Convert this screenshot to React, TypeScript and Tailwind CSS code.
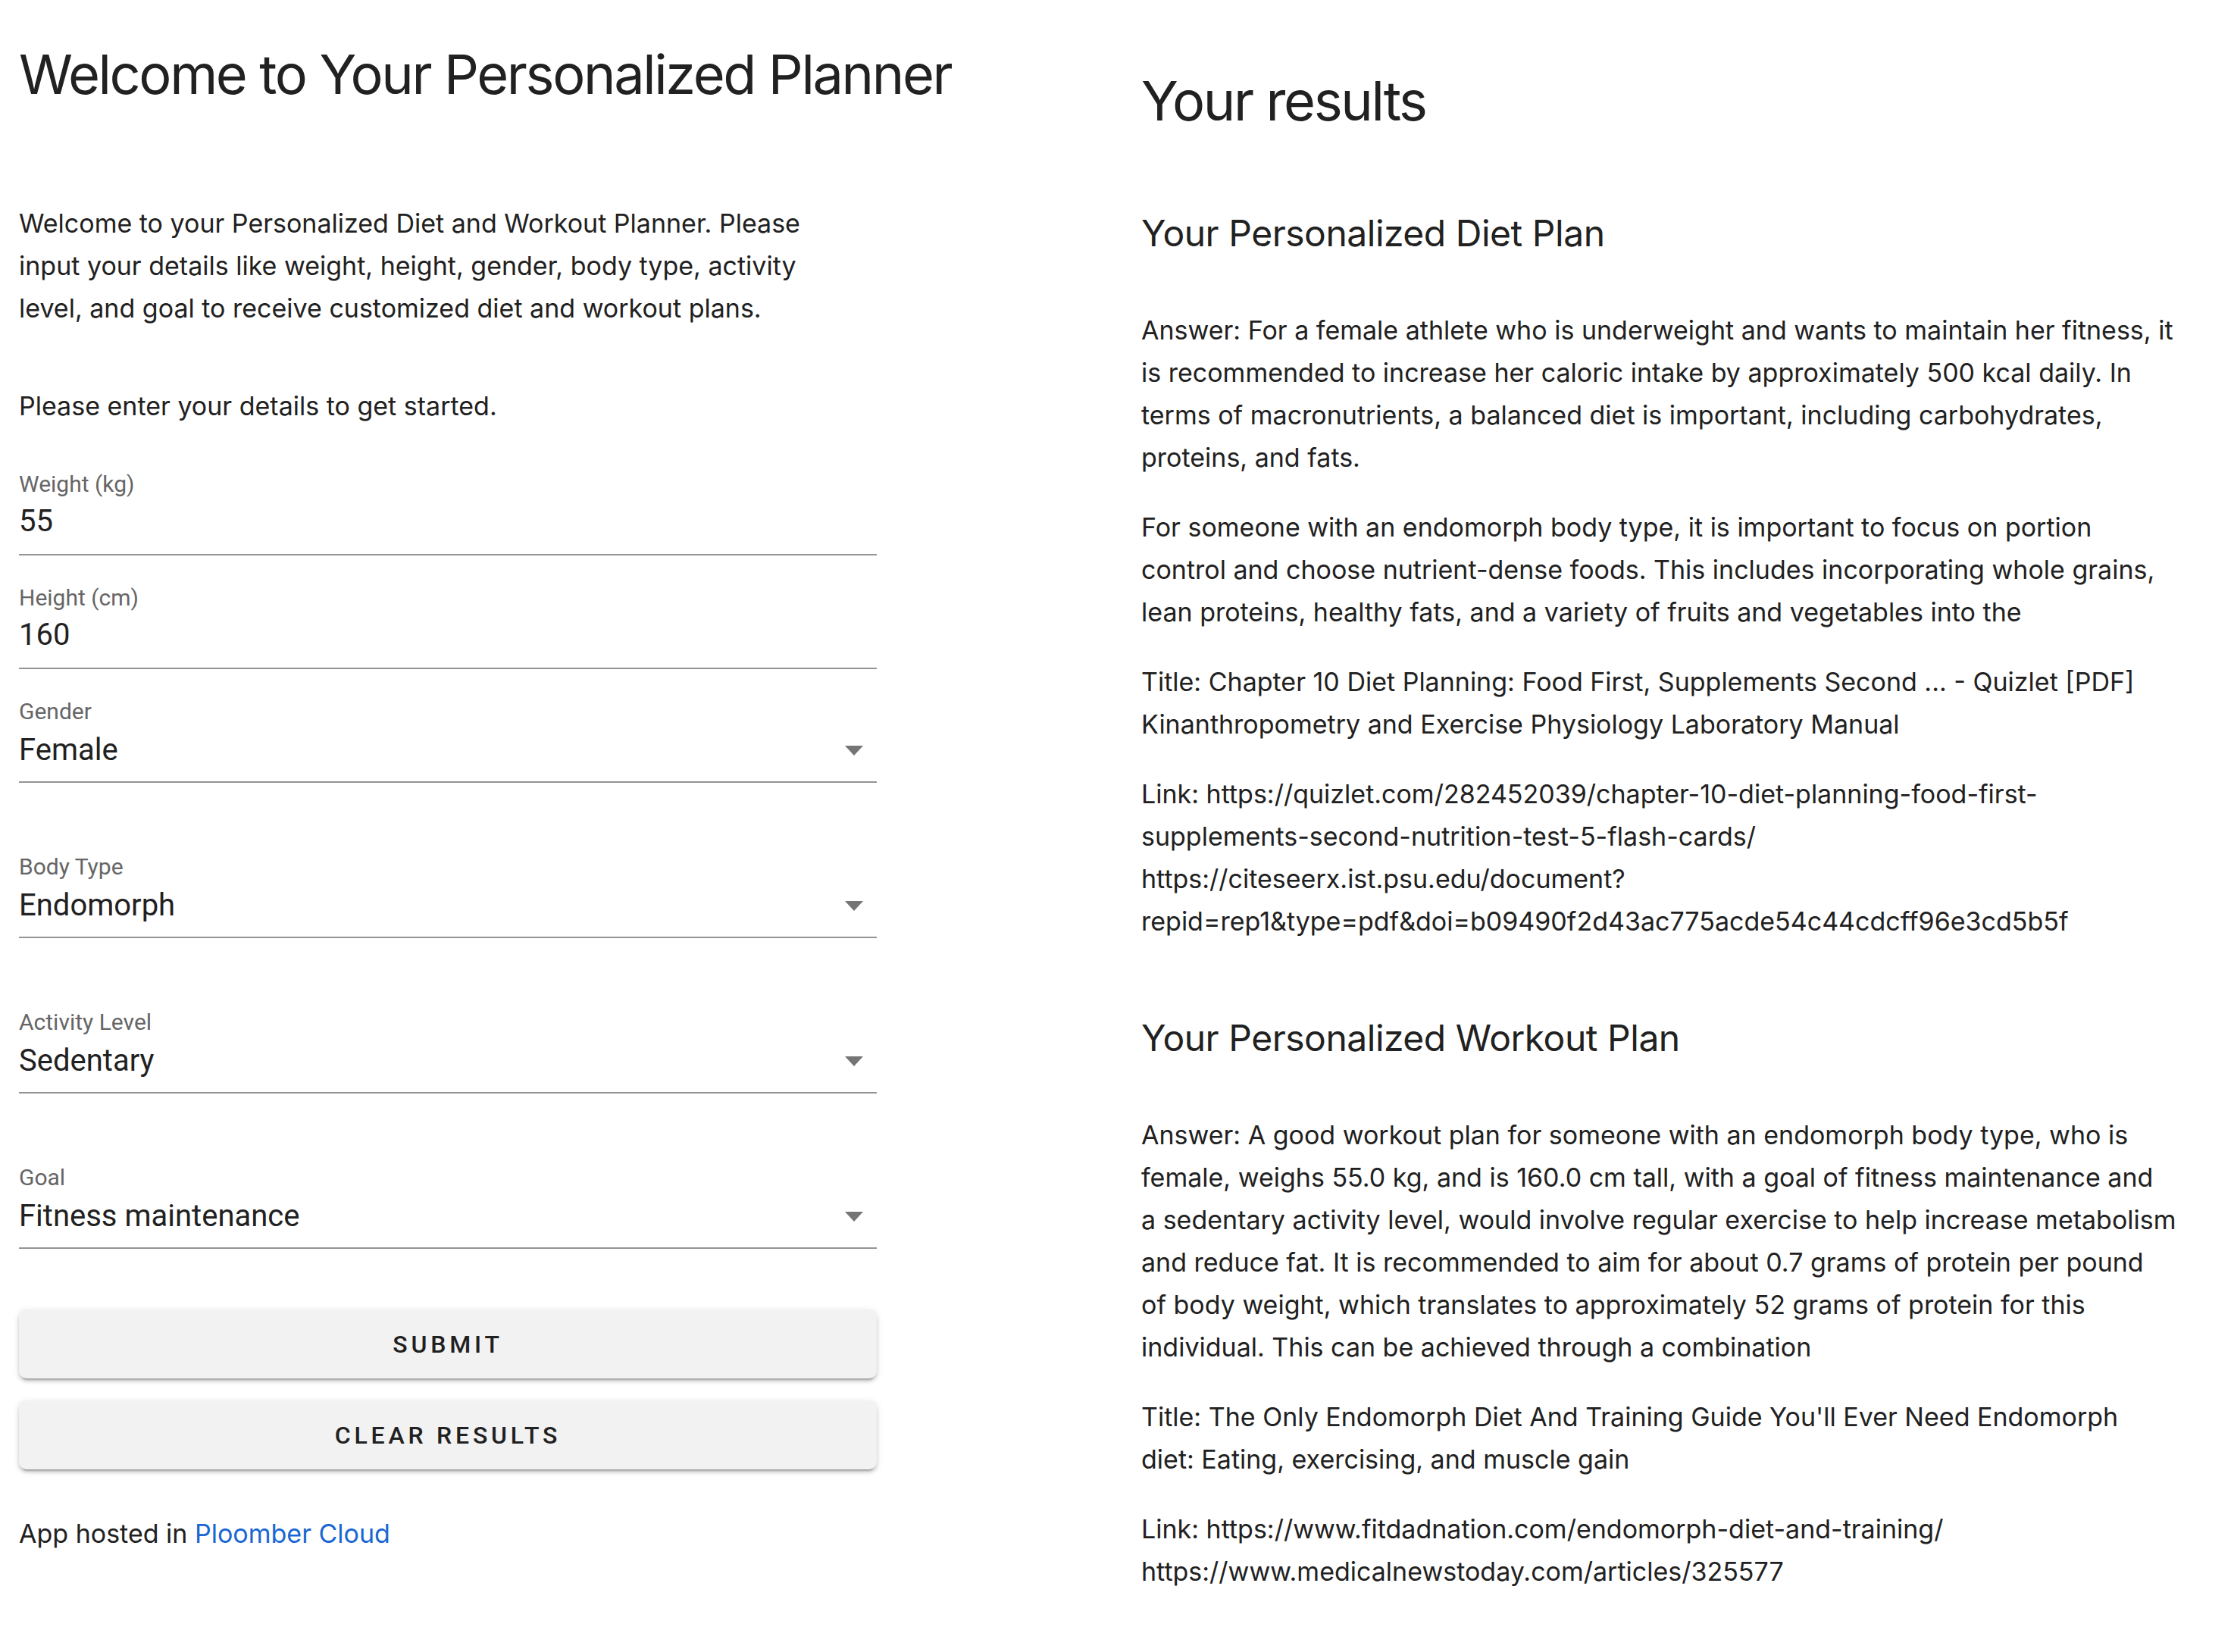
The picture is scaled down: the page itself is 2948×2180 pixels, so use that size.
import { ReactNode } from "react"

// Planner page: form on the left, generated results on the right

const sans = "font-['Inter','Noto_Sans',sans-serif]"
const roboto = "font-['Roboto','Liberation_Sans',sans-serif]"

type Field = { label: string; value: string; select?: boolean }

const fields: Field[] = [
  { label: "Weight (kg)", value: "55" },
  { label: "Height (cm)", value: "160" },
  { label: "Gender", value: "Female", select: true },
  { label: "Body Type", value: "Endomorph", select: true },
  { label: "Activity Level", value: "Sedentary", select: true },
  { label: "Goal", value: "Fitness maintenance", select: true },
]

const dietPlan: string[][] = [
  [
    "Answer: For a female athlete who is underweight and wants to maintain her fitness, it",
    "is recommended to increase her caloric intake by approximately 500 kcal daily. In",
    "terms of macronutrients, a balanced diet is important, including carbohydrates,",
    "proteins, and fats.",
  ],
  [
    "For someone with an endomorph body type, it is important to focus on portion",
    "control and choose nutrient-dense foods. This includes incorporating whole grains,",
    "lean proteins, healthy fats, and a variety of fruits and vegetables into the",
  ],
  [
    "Title: Chapter 10 Diet Planning: Food First, Supplements Second ... - Quizlet [PDF]",
    "Kinanthropometry and Exercise Physiology Laboratory Manual",
  ],
  [
    "Link: https://quizlet.com/282452039/chapter-10-diet-planning-food-first-",
    "supplements-second-nutrition-test-5-flash-cards/",
    "https://citeseerx.ist.psu.edu/document?",
    "repid=rep1&type=pdf&doi=b09490f2d43ac775acde54c44cdcff96e3cd5b5f",
  ],
]

const workoutPlan: string[][] = [
  [
    "Answer: A good workout plan for someone with an endomorph body type, who is",
    "female, weighs 55.0 kg, and is 160.0 cm tall, with a goal of fitness maintenance and",
    "a sedentary activity level, would involve regular exercise to help increase metabolism",
    "and reduce fat. It is recommended to aim for about 0.7 grams of protein per pound",
    "of body weight, which translates to approximately 52 grams of protein for this",
    "individual. This can be achieved through a combination",
  ],
  [
    "Title: The Only Endomorph Diet And Training Guide You'll Ever Need Endomorph",
    "diet: Eating, exercising, and muscle gain",
  ],
  ["Link: https://www.fitdadnation.com/endomorph-diet-and-training/", "https://www.medicalnewstoday.com/articles/325577"],
]

function FormField({ field, first, afterSelect }: { field: Field; first: boolean; afterSelect: boolean }) {
  const spacing = first ? "" : afterSelect ? "mt-[93px]" : "mt-[38px]"
  return (
    <div className={`${spacing} border-b-2 border-[#949494] ${field.select ? "pb-[17px]" : "pb-[19px]"}`}>
      <div className={`${roboto} text-[30px] leading-[36px] text-[#666666]`}>{field.label}</div>
      <div className={`flex items-center justify-between ${field.select ? "mt-[9px]" : "mt-[7px]"}`}>
        <span className={`${roboto} text-[40px] leading-[48px] text-[#212121]`}>{field.value}</span>
        {field.select && (
          <svg width="24" height="13" viewBox="0 0 24 13" className="mr-[18px]">
            <path d="M0 0 L24 0 L12 13 Z" fill="#757575" />
          </svg>
        )}
      </div>
    </div>
  )
}

function ActionButton({ children, className = "" }: { children: ReactNode; className?: string }) {
  return (
    <button
      type="button"
      className={`${className} ${roboto} h-[91px] w-full rounded-[10px] bg-[#f2f2f2] text-[32px] font-medium tracking-[0.15em] text-[#212121] shadow-[0_6px_2px_-4px_rgba(0,0,0,0.2),0_4px_4px_0_rgba(0,0,0,0.14),0_2px_10px_0_rgba(0,0,0,0.12)]`}
    >
      {children}
    </button>
  )
}

function Para({ children, className = "" }: { children: ReactNode; className?: string }) {
  return <p className={`${className} text-[34px] leading-[56px] text-[#212121]`}>{children}</p>
}

function Result({ title, paragraphs, className = "" }: { title: string; paragraphs: string[][]; className?: string }) {
  return (
    <section className={className}>
      <h3 className="text-[48px] leading-[58px] tracking-[-0.01em]">{title}</h3>
      {paragraphs.map((lines, i) => (
        <Para key={i} className={i === 0 ? "mt-[71px]" : "mt-[36px]"}>
          {lines.map(l => (
            <span key={l} className="block whitespace-nowrap">
              {l}
            </span>
          ))}
        </Para>
      ))}
    </section>
  )
}

export default function App() {
  return (
    <div className={`${sans} grid min-h-[2180px] grid-cols-2 bg-white text-[#212121]`}>
      {/* Left: intro + form */}
      <div className="pl-[25px] pt-[55px]">
        <h1 className="text-[72px] leading-[86px] tracking-[-0.033em] whitespace-nowrap">
          Welcome to Your Personalized Planner
        </h1>

        <Para className="mt-[126px] max-w-[1090px]">
          Welcome to your Personalized Diet and Workout Planner. Please input your details like weight, height,
          gender, body type, activity level, and goal to receive customized diet and workout plans.
        </Para>
        <Para className="mt-[73px]">Please enter your details to get started.</Para>

        <div className="mt-[57px] w-[1132px]">
          {fields.map((f, i) => (
            <FormField key={f.label} field={f} first={i === 0} afterSelect={i > 0 && !!fields[i - 1].select} />
          ))}

          <ActionButton className="mt-[80px]">SUBMIT</ActionButton>
          <ActionButton className="mt-[29px]">CLEAR RESULTS</ActionButton>
        </div>

        <Para className="mt-[57px]">
          App hosted in{" "}
          <a href="#" className="text-[#1967d2]">
            Ploomber Cloud
          </a>
        </Para>
      </div>

      {/* Right: results */}
      <div className="pl-[32px] pt-[90px]">
        <h2 className="text-[72px] leading-[86px] tracking-[-0.033em]">Your results</h2>
        <Result className="mt-[103px]" title="Your Personalized Diet Plan" paragraphs={dietPlan} />
        <Result className="mt-[97px]" title="Your Personalized Workout Plan" paragraphs={workoutPlan} />
      </div>
    </div>
  )
}
